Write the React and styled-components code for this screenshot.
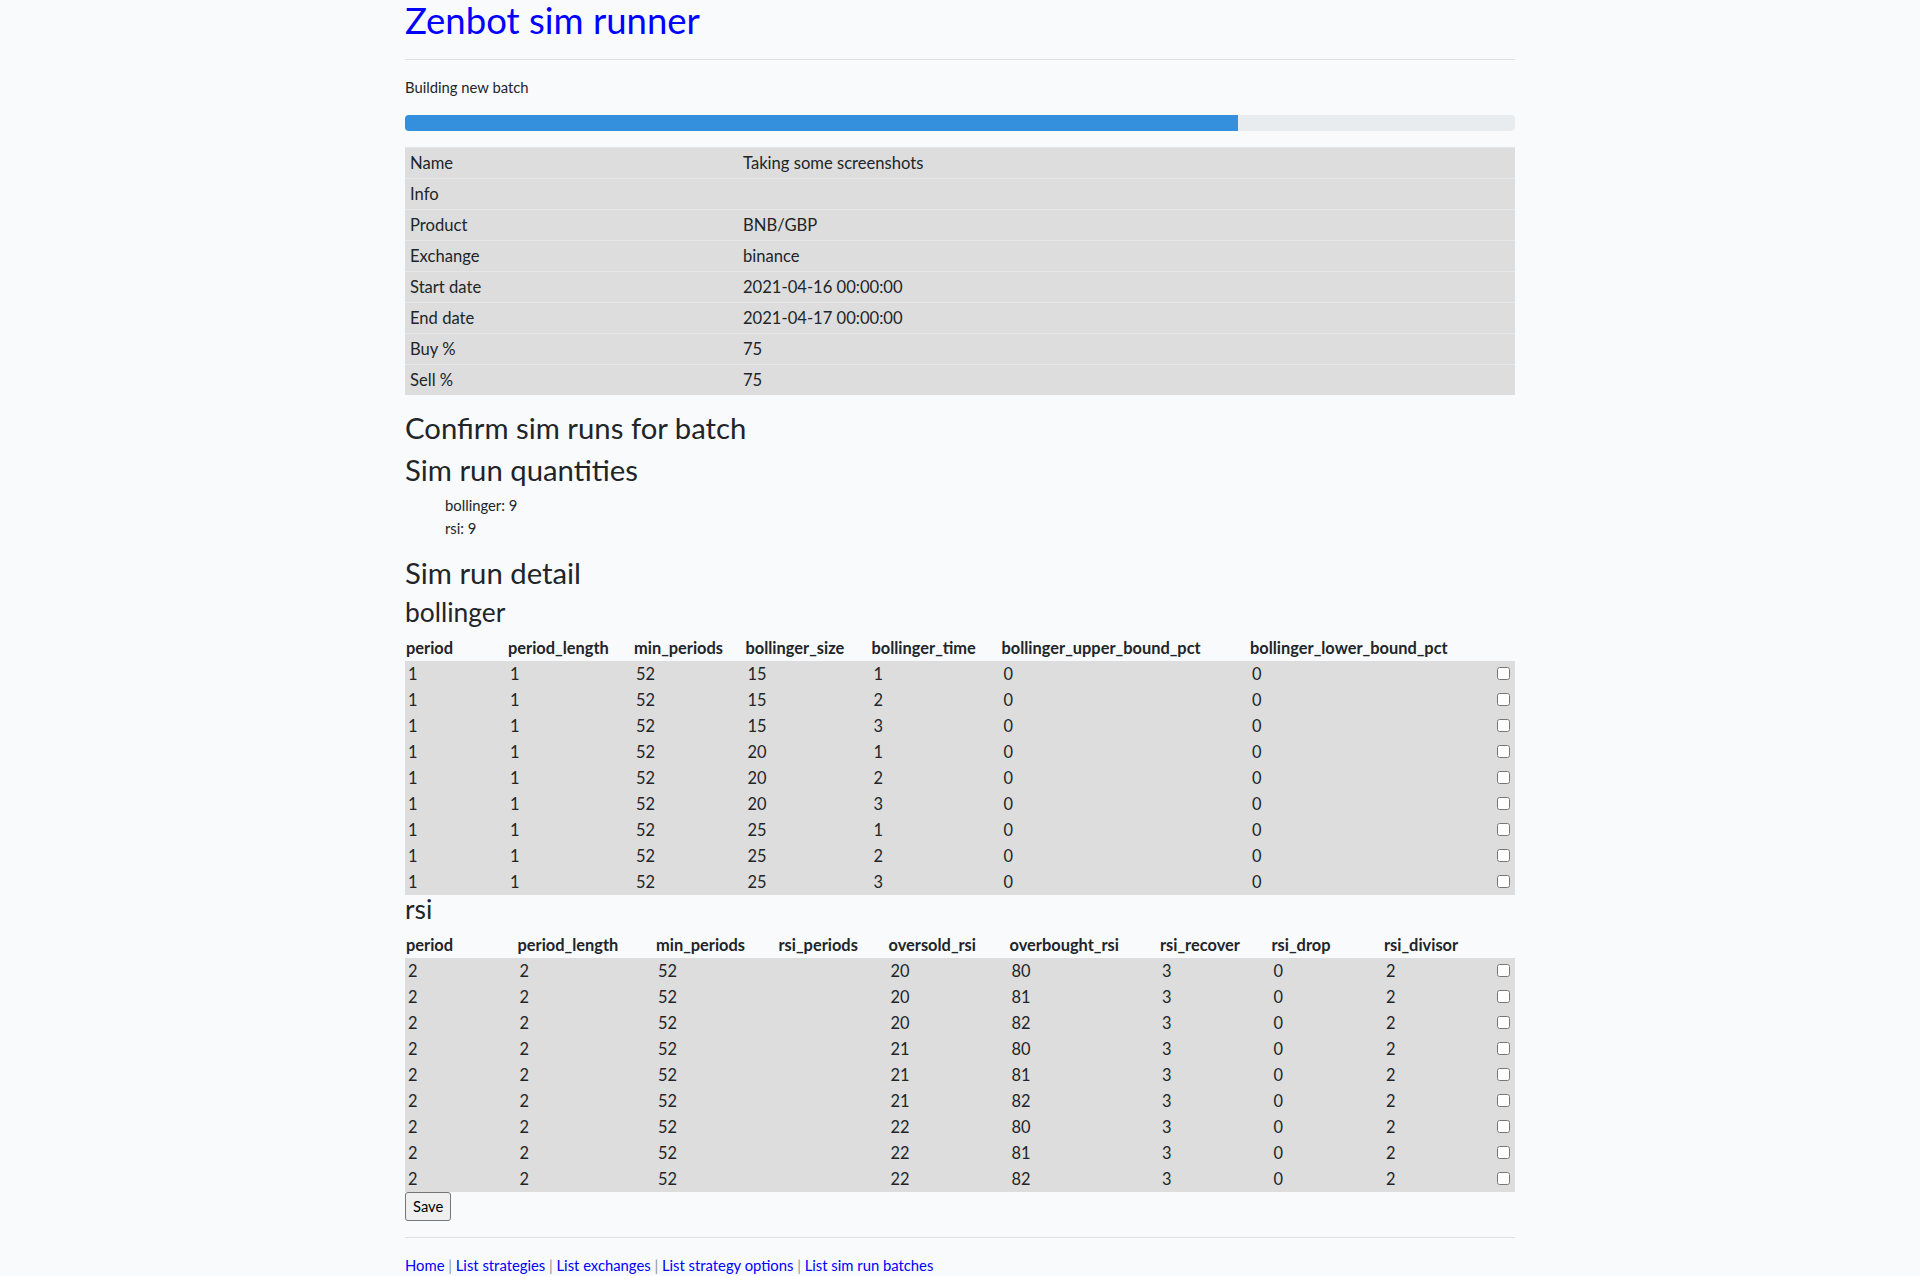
import React from "react";
import styled, { createGlobalStyle } from "styled-components";

const GlobalStyle = createGlobalStyle`
  html, body { margin: 0; padding: 0; }
  body {
    background: #f8fafc;
    color: #212529;
    font-family: Lato, "Liberation Sans", sans-serif;
    font-size: 14.8px;
    line-height: 23.04px;
  }
  * { box-sizing: border-box; }
`;

const Container = styled.main`
  width: 1110px;
  margin: 0 auto;
`;

const Title = styled.h1`
  margin: 0 0 19px;
  font-size: 36.5px;
  font-weight: 400;
  line-height: 40px;
  a { color: #0000ff; text-decoration: none; }
`;

const Rule = styled.hr`
  margin: 0 0 16px;
  border: 0;
  border-top: 1px solid rgba(0, 0, 0, 0.1);
`;

const Status = styled.p`
  margin: 0 0 16px;
`;

const Progress = styled.div`
  display: flex;
  height: 16px;
  margin-bottom: 16px;
  background: #e9ecef;
  border-radius: 4px;
  overflow: hidden;
`;

const ProgressBar = styled.div`
  background: #3490dc;
  height: 100%;
`;

const InfoTable = styled.table`
  width: 100%;
  border-collapse: collapse;
  background: #dddddd;
  margin-bottom: 16px;
  font-size: 16.6px;
  td {
    padding: 3px 5px;
    line-height: 24px;
    border-top: 1px solid #e4e6ea;
    vertical-align: top;
  }
  td:first-child { width: 30%; }
`;

const SectionTitle = styled.h2`
  margin: 0 0 7px;
  font-size: 29.3px;
  font-weight: 400;
  line-height: 34.5px;
`;

const QuantityList = styled.ul`
  list-style: none;
  margin: 0 0 16px;
  padding-left: 40px;
`;

const StrategyTitle = styled.h3`
  margin: 0 0 9px;
  font-size: 26.4px;
  font-weight: 400;
  line-height: 28px;
`;

const RunTable = styled.table`
  width: 100%;
  table-layout: fixed;
  border-collapse: collapse;
  font-size: 16.4px;
  line-height: 26px;
  th {
    padding: 0 1px;
    height: 26px;
    text-align: left;
    font-weight: 700;
    white-space: nowrap;
  }
  tbody tr { background: #dddddd; }
  td {
    padding: 0 1px 0 3px;
    height: 26px;
    white-space: nowrap;
  }
`;

const Col = styled.col`
  width: ${(p) => p.$w}px;
`;

const Check = styled.input`
  display: block;
  width: 13px;
  height: 13px;
  margin: 3px 3px 3px 1px;
`;

const SaveButton = styled.button`
  display: block;
  height: 29px;
  padding: 0 7px;
  font: inherit;
  color: #000;
  background: #efefef;
  border: 1px solid #767676;
  border-radius: 3px;
`;

const FooterRule = styled(Rule)`
  margin-top: 16px;
`;

const FooterNav = styled.nav`
  color: #8f9499;
  a { color: #0000ff; text-decoration: none; }
`;

const info = [
  ["Name", "Taking some screenshots"],
  ["Info", ""],
  ["Product", "BNB/GBP"],
  ["Exchange", "binance"],
  ["Start date", "2021-04-16 00:00:00"],
  ["End date", "2021-04-17 00:00:00"],
  ["Buy %", "75"],
  ["Sell %", "75"],
];

const bollinger = {
  name: "bollinger",
  columns: [
    ["period", 102],
    ["period_length", 126],
    ["min_periods", 111.5],
    ["bollinger_size", 126],
    ["bollinger_time", 130],
    ["bollinger_upper_bound_pct", 248.5],
    ["bollinger_lower_bound_pct", 244],
  ],
  rows: [15, 20, 25].flatMap((size) =>
    [1, 2, 3].map((time) => [1, 1, 52, size, time, 0, 0])
  ),
};

const rsi = {
  name: "rsi",
  columns: [
    ["period", 111.5],
    ["period_length", 138.5],
    ["min_periods", 122.5],
    ["rsi_periods", 110],
    ["oversold_rsi", 121],
    ["overbought_rsi", 150.5],
    ["rsi_recover", 111.5],
    ["rsi_drop", 112.5],
    ["rsi_divisor", 110],
  ],
  rows: [20, 21, 22].flatMap((os) =>
    [80, 81, 82].map((ob) => [2, 2, 52, "", os, ob, 3, 0, 2])
  ),
};

function StrategyRuns({ strategy }) {
  return (
    <>
      <StrategyTitle>{strategy.name}</StrategyTitle>
      <RunTable>
        <colgroup>
          {strategy.columns.map(([name, w]) => (
            <Col key={name} $w={w} />
          ))}
          <Col $w={22} />
        </colgroup>
        <thead>
          <tr>
            {strategy.columns.map(([name]) => (
              <th key={name}>{name}</th>
            ))}
            <th />
          </tr>
        </thead>
        <tbody>
          {strategy.rows.map((row, i) => (
            <tr key={i}>
              {row.map((v, j) => (
                <td key={j}>{v}</td>
              ))}
              <td>
                <Check type="checkbox" />
              </td>
            </tr>
          ))}
        </tbody>
      </RunTable>
    </>
  );
}

const links = [
  "Home",
  "List strategies",
  "List exchanges",
  "List strategy options",
  "List sim run batches",
];

export default function App() {
  const built = 3;
  const total = 4;
  return (
    <>
      <GlobalStyle />
      <Container>
        <Title>
          <a href="#">Zenbot sim runner</a>
        </Title>
        <Rule />
        <Status>Building new batch</Status>
        <Progress>
          <ProgressBar style={{ width: `${(built / total) * 100}%` }} />
        </Progress>
        <InfoTable>
          <tbody>
            {info.map(([k, v]) => (
              <tr key={k}>
                <td>{k}</td>
                <td>{v}</td>
              </tr>
            ))}
          </tbody>
        </InfoTable>
        <SectionTitle>Confirm sim runs for batch</SectionTitle>
        <SectionTitle>Sim run quantities</SectionTitle>
        <QuantityList>
          <li>bollinger: 9</li>
          <li>rsi: 9</li>
        </QuantityList>
        <SectionTitle>Sim run detail</SectionTitle>
        <StrategyRuns strategy={bollinger} />
        <StrategyRuns strategy={rsi} />
        <SaveButton type="button">Save</SaveButton>
        <FooterRule />
        <FooterNav>
          {links.map((l, i) => (
            <React.Fragment key={l}>
              {i > 0 && " | "}
              <a href="#">{l}</a>
            </React.Fragment>
          ))}
        </FooterNav>
      </Container>
    </>
  );
}
